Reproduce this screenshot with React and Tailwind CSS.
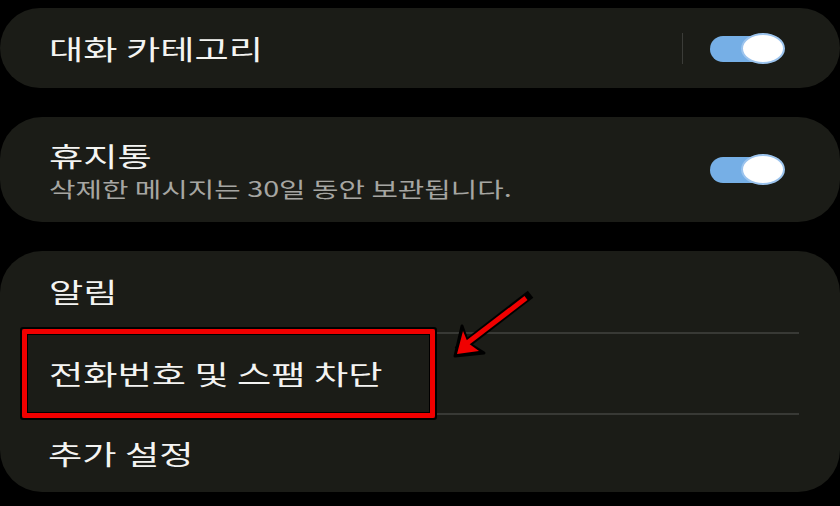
const font = { fontFamily: '"Noto Sans CJK KR", "Noto Sans", sans-serif' };

function Title({ children }) {
  return (
    <span className="block origin-left scale-x-[1.38] text-[27px] leading-none font-normal text-[#f4f4f2] whitespace-nowrap">
      {children}
    </span>
  );
}

function Toggle() {
  return (
    <div className="relative w-[75px] h-[31px] shrink-0">
      <div className="absolute left-0 top-[3px] w-[60px] h-[26px] rounded-full bg-[#76afe6]" />
      <div className="absolute right-0 top-0 w-[44px] h-[31px] rounded-[50%] bg-white border-2 border-[#9cc4ee]" />
    </div>
  );
}

export default function App() {
  return (
    <div className="w-[840px] h-[506px] bg-black pt-2 flex flex-col gap-[29px] overflow-hidden" style={font}>
      {/* 대화 카테고리 */}
      <div className="h-20 rounded-[42px] bg-[#1b1c17] flex items-center pl-[49px] pr-[55px]">
        <div className="flex-1">
          <Title>대화 카테고리</Title>
        </div>
        <div className="w-px h-[31px] bg-[#3b3c38] mr-[27px]" />
        <Toggle />
      </div>

      {/* 휴지통 */}
      <div className="h-[105px] rounded-[42px] bg-[#1b1c17] flex items-center pl-[49px] pr-[55px]">
        <div className="flex-1 flex flex-col gap-[9px] pt-[1px]">
          <Title>휴지통</Title>
          <span className="block origin-left scale-x-[1.37] text-[21px] leading-none text-[#a6a6a2] whitespace-nowrap">
            삭제한 메시지는 30일 동안 보관됩니다.
          </span>
        </div>
        <Toggle />
      </div>

      {/* 설정 목록 */}
      <div className="relative h-[241px] rounded-[42px] bg-[#1b1c17] flex flex-col">
        <div className="h-[81px] flex items-center pl-[49px]">
          <Title>알림</Title>
        </div>
        <div className="ml-[49px] mr-[41px] h-[2px] bg-[#383935]" />
        <div className="h-[79px] flex items-center pl-[49px]">
          <Title>전화번호 및 스팸 차단</Title>
        </div>
        <div className="ml-[49px] mr-[41px] h-[2px] bg-[#383935]" />
        <div className="flex-1 flex items-center pl-[48px]">
          <Title>추가 설정</Title>
        </div>

        {/* 강조 표시 */}
        <div className="absolute left-5 top-[76px] w-[417px] h-[93px] rounded-[3px] border-2 border-black">
          <div className="w-full h-full rounded-[2px] border-[5px] border-[#f00000]">
            <div className="w-full h-full border border-black" />
          </div>
        </div>
        <svg className="absolute left-0 top-0" width="840" height="241" viewBox="0 251 840 241">
          <path d="M527 297 L461 348" stroke="black" strokeWidth="9" strokeLinecap="square" />
          <path d="M455 356 L462 326 L468 343 L484 353 Z" fill="black" stroke="black" strokeWidth="3" strokeLinejoin="round" />
          <path d="M526 298 L462 347" stroke="#f00000" strokeWidth="5" />
          <path d="M457 354 L463 331 L468 343 L479 351 Z" fill="#f00000" />
        </svg>
      </div>
    </div>
  );
}
